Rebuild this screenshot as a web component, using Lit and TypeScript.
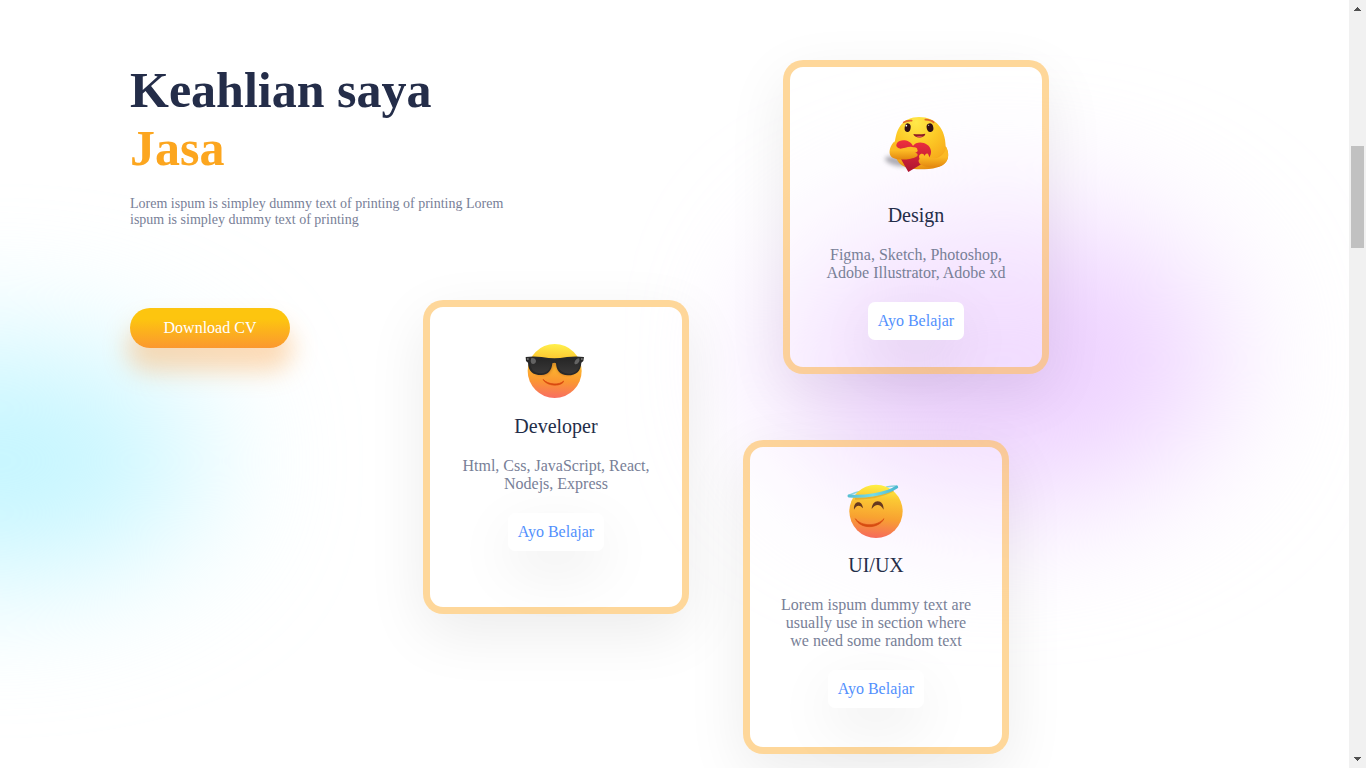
import { LitElement, html, css } from "lit";
import { customElement, property } from "lit/decorators.js";

const hug = html`<svg width="90" height="85" viewBox="3 0 270 255">
  <defs>
    <radialGradient id="f" cx=".4" cy=".1" r=".95"><stop offset="0" stop-color="#ffe94a"/><stop offset=".45" stop-color="#fdca26"/><stop offset=".8" stop-color="#f8ae1c"/><stop offset="1" stop-color="#e0850f"/></radialGradient>
    <linearGradient id="a" x1="0" y1="0" x2="0" y2="1"><stop offset="0" stop-color="#fbb922"/><stop offset=".5" stop-color="#fcba24"/><stop offset="1" stop-color="#e3860f"/></linearGradient>
    <linearGradient id="h" x1="0" y1="0" x2="0" y2="1"><stop offset="0" stop-color="#ee303e"/><stop offset="1" stop-color="#ad1330"/></linearGradient>
    <filter id="b" x="-30%" y="-50%" width="160%" height="200%"><feGaussianBlur stdDeviation="6"/></filter>
  </defs>
  <ellipse cx="80" cy="184" rx="36" ry="13" transform="rotate(14 80 184)" fill="#60606c" opacity=".5" filter="url(#b)"/>
  <path d="M74 145C74 86 98 51 147 51c52 0 79 36 80 88 8 14 11 31 3 43-10 20-42 26-80 26-46 0-76-13-76-63z" fill="url(#f)"/>
  <path d="M129 138c-8-19-38-23-48-9-6 12 0 28 10 45l24 42 46-28c15-9 23-22 22-35-3-27-43-33-54-15z" fill="url(#h)"/>
  <path d="M74 124c-15 13-19 34-12 44 10 12 38 13 60 8 13-3 22-7 21-12-1-4-5-5-8-5 7-3 10-7 7-10 1-5-5-8-11-7-12-6-28 3-40 4-9-1-15-8-17-22z" fill="url(#a)"/>
  <path d="M229 140c12 30 4 50-18 58-20 6-43 5-56-3-9-4-12-14-6-18-4-9-1-16 7-16 5 0 7 3 8 7 2-7 7-9 10-6s2 8 5 11c18 7 45-4 50-33z" fill="url(#a)"/>
  <g fill="#321014"><ellipse cx="113" cy="83" rx="9" ry="13" transform="rotate(8 113 83)"/><ellipse cx="180" cy="83" rx="10" ry="13" transform="rotate(-12 180 83)"/></g>
  <g fill="#fff"><circle cx="109" cy="77" r="2.500"/><circle cx="176" cy="76" r="1.500"/></g>
  <path d="M101 67q9-6 24-5M166 59q18 1 25 8" fill="none" stroke="#e0682a" stroke-width="5" stroke-linecap="round"/>
  <path d="M130 102q19 2 36-1c-1 14-33 16-36 1z" fill="#8d1f24"/><path d="M138 110q11-4 21 0-9 4-21 0z" fill="#e8505a"/>
</svg>`;

const cool = html`<svg width="90" height="80" viewBox="3 0 270 240">
  <defs>
    <linearGradient id="f" x1=".5" y1="0" x2=".45" y2="1"><stop offset="0" stop-color="#fff04b"/><stop offset=".3" stop-color="#fdc42f"/><stop offset=".68" stop-color="#fb9831"/><stop offset="1" stop-color="#f86e62"/></linearGradient>
    <linearGradient id="g" x1="0" y1="0" x2="0" y2="1"><stop offset="0" stop-color="#262626"/><stop offset="1" stop-color="#393838"/></linearGradient>
    <filter id="b"><feGaussianBlur stdDeviation="4"/></filter>
  </defs>
  <circle cx="134" cy="123" r="81" fill="url(#f)"/>
  <path d="M61 94q4 42 36 42c28 0 32-28 36-36 5 8 10 36 38 36 32 0 37-42 37-42z" fill="#a65315" opacity=".55" filter="url(#b)"/>
  <path d="M47 81q23-3 48 0 22 4 38 4t38-4q28-3 51 0l-2 12-6 5c-2 25-14 38-40 38-25 0-35-16-36-36q-5-4-11 0c-2 20-11 35-33 35-27 0-39-12-40-37l-6-5z" fill="#292929"/>
  <path d="M61 87q28-5 61 3c2 26-7 38-29 40-25-1-33-13-32-43zM143 90q35-9 67-4c0 30-9 43-32 45-26-1-38-18-35-41z" fill="url(#g)"/>
  <path d="M64 84q13-1 14 9c0 8-9 11-14 7q-4-7 0-16zM193 99c2-9 9-15 15-14q3 8-4 15c-5 4-10 4-11-1z" fill="#777" opacity=".75"/>
  <path d="M51 87h5M213 87h5" stroke="#aaa" stroke-width="3"/>
  <path d="M99 148c15 17 50 18 62 5-3 17-51 18-62-5z" fill="#d8480f" stroke="#d8480f" stroke-width="2" stroke-linejoin="round"/>
</svg>`;

const halo = html`<svg width="80" height="70" viewBox="3 0 240 210">
  <defs>
    <linearGradient id="f" x1=".5" y1="0" x2=".42" y2="1"><stop offset="0" stop-color="#fff044"/><stop offset=".25" stop-color="#fbc934"/><stop offset=".62" stop-color="#f8a231"/><stop offset="1" stop-color="#f6695c"/></linearGradient>
    <linearGradient id="r" x1="0" y1="0" x2="1" y2="0"><stop offset="0" stop-color="#57bfd2"/><stop offset=".5" stop-color="#74dcea"/><stop offset="1" stop-color="#4bb8d0"/></linearGradient>
  </defs>
  <path d="M42 61Q60 52 80 48M155 36Q180 31 186 34" fill="none" stroke="#8ad3df" stroke-width="5" stroke-linecap="round"/>
  <circle cx="123" cy="109" r="80" fill="url(#f)"/>
  <path d="M60 71q64 1 116-24" fill="none" stroke="#c9952b" stroke-width="6" opacity=".45"/>
  <path d="M42 63c42 4 112-5 143-27" fill="none" stroke="url(#r)" stroke-width="9" stroke-linecap="round"/>
  <path d="M57 104c-1-14 5-22 13-22 8 0 13 8 14 18-5-6-9-8-13-8-6 0-10 4-14 12zM110 102c1-14 8-23 18-23 11 0 18 9 18 25-6-10-12-14-18-14-7 0-12 4-18 12z" fill="#67391f"/>
  <path d="M61 131c17 23 64 25 86 0-17 32-71 32-86 0z" fill="#d74b10" stroke="#d74b10" stroke-width="2" stroke-linejoin="round"/>
</svg>`;

@customElement("skill-card")
class SkillCard extends LitElement {
  @property({ attribute: false }) emoji: unknown;
  @property() heading = "";
  @property() detail = "";

  static styles = css`
    :host {
      box-sizing: border-box; width: 266px; height: 314px; flex: none;
      display: flex; flex-direction: column; align-items: center;
      border: 7px solid rgba(252, 166, 31, 0.45); border-radius: 20px;
      background: rgba(255, 255, 255, 0.26);
      box-shadow: 0 19px 60px rgba(0, 0, 0, 0.08);
      padding: 0 26px; text-align: center;
    }
    svg { display: block; flex: none; margin-bottom: var(--emoji-gap, 0); }
    .heading { font-size: 20px; line-height: 23px; color: #242d49; margin-bottom: 19px; }
    .detail { font-size: 16px; line-height: 18px; color: #788097; margin-bottom: 20px; }
    .learn {
      font: 16px/18px "Liberation Serif", serif; color: #5290fd; background: #fff;
      border: 0; border-radius: 7px; padding: 10px;
      box-shadow: 0 19px 60px rgba(0, 0, 0, 0.08);
    }
  `;

  render() {
    return html`${this.emoji}
      <div class="heading">${this.heading}</div>
      <div class="detail">${this.detail}</div>
      <button class="learn">Ayo Belajar</button>`;
  }
}

@customElement("app-root")
class AppRoot extends LitElement {
  static styles = css`
    :host {
      display: flex; position: relative; height: 768px; overflow: hidden; background: #fff;
      font-family: "Liberation Serif", "Times New Roman", serif; isolation: isolate;
    }
    .glow { position: absolute; z-index: -1; border-radius: 50%; filter: blur(72px); }
    .purple { left: 783px; top: 220px; width: 440px; height: 280px; background: #edd0ff; }
    .cyan { left: -215px; top: 351px; width: 420px; height: 220px; background: #c1f5ff; }
    .page { flex: 1; display: flex; padding: 60px 0 0 130px; }
    .left { width: 559px; flex: none; }
    .title { padding-top: 1px; font-size: 50px; line-height: 58px; font-weight: bold; color: #242d49; }
    .accent { color: #fca61f; }
    .intro { width: 400px; margin-top: 19px; font-size: 14px; line-height: 16px; color: #788097; }
    .row { display: flex; justify-content: space-between; align-items: flex-start; margin-top: 72px; }
    .cv {
      width: 160px; height: 40px; margin-top: 8px; border: 0; border-radius: 34px; color: #fff;
      font: 16px "Liberation Serif", serif;
      background: linear-gradient(180deg, #fdc50f 26.71%, #fb982f 99.36%);
      box-shadow: 0 20px 24px 3px rgba(251, 152, 47, 0.35);
    }
    .right { display: flex; flex-direction: column; gap: 66px; margin-left: 54px; }
    .design { margin-left: 40px; padding-top: 33px; --emoji-gap: 19px; }
    .developer { padding-top: 23px; --emoji-gap: 5px; }
    .uiux { padding-top: 28px; --emoji-gap: 9px; }
    .scroll {
      width: 17px; flex: none; background: #f1f1f1; display: flex; flex-direction: column;
      align-items: center; justify-content: space-between; position: relative;
    }
    .thumb { position: absolute; left: 2px; top: 146px; width: 13px; height: 102px; background: #c1c1c1; }
    .scroll svg { display: block; }
  `;

  render() {
    return html`
      <div class="glow purple"></div>
      <div class="glow cyan"></div>
      <div class="page">
        <div class="left">
          <div class="title">Keahlian saya<div class="accent">Jasa</div></div>
          <div class="intro">Lorem ispum is simpley dummy text of printing of printing Lorem ispum is simpley dummy text of printing</div>
          <div class="row">
            <button class="cv">Download CV</button>
            <skill-card class="developer" .emoji=${cool} heading="Developer" detail="Html, Css, JavaScript, React, Nodejs, Express"></skill-card>
          </div>
        </div>
        <div class="right">
          <skill-card class="design" .emoji=${hug} heading="Design" detail="Figma, Sketch, Photoshop, Adobe Illustrator, Adobe xd"></skill-card>
          <skill-card class="uiux" .emoji=${halo} heading="UI/UX" detail="Lorem ispum dummy text are usually use in section where we need some random text"></skill-card>
        </div>
      </div>
      <div class="scroll">
        <svg width="17" height="17"><path d="M5 11h7v-1h-1v-1h-1v-1h-1v-1h-1v1h-1v1h-1v1h-1z" fill="#505050"/></svg>
        <div class="thumb"></div>
        <svg width="17" height="17"><path d="M5 6h7v1h-1v1h-1v1h-1v1h-1v-1h-1v-1h-1v-1h-1z" fill="#505050"/></svg>
      </div>`;
  }
}
